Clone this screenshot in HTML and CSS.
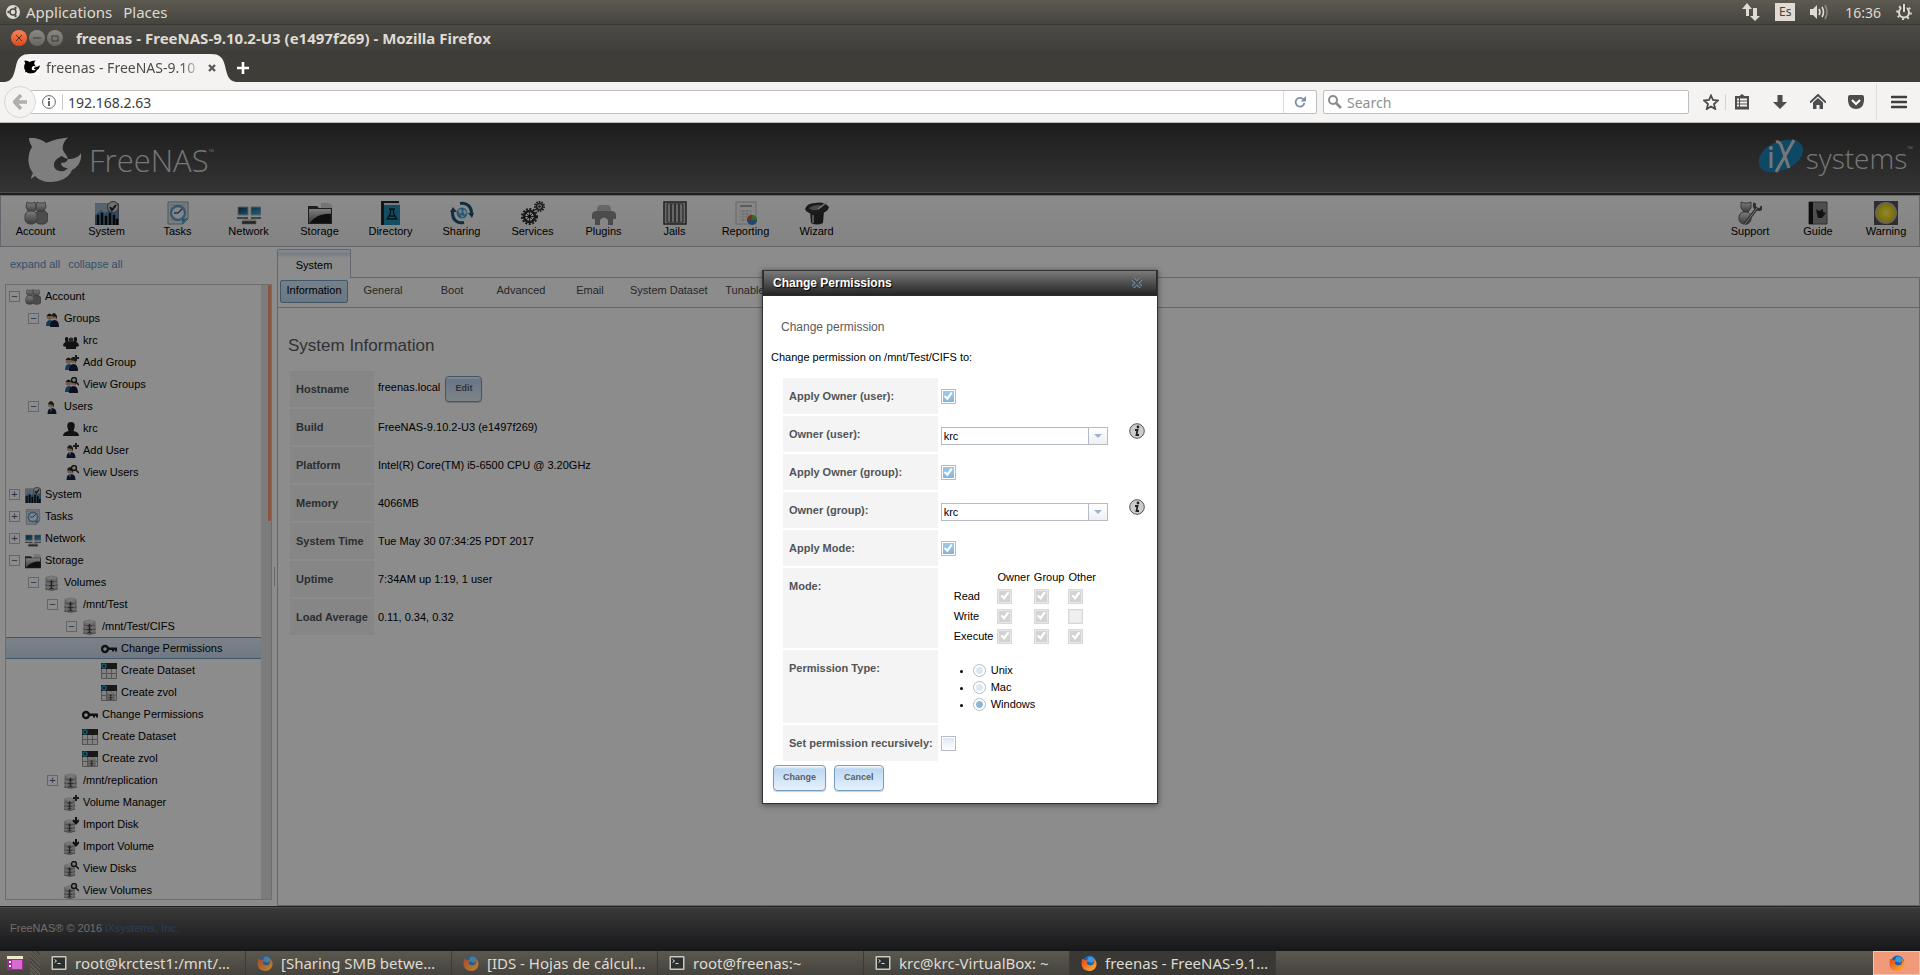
FILE: index.html
```html
<!DOCTYPE html>
<html lang="en">
<head>
    <meta charset="UTF-8">
    <meta name="viewport" content="width=device-width, initial-scale=1.0">
    <title>freenas - FreeNAS-9.10.2-U3 (e1497f269)</title>
    <link rel="stylesheet" href="styles.css">
</head>
<body>
    <!-- icon set -->
    <svg class="sprite" aria-hidden="true">
        <defs>
            <linearGradient id="silver" x1="0" y1="0" x2="0" y2="1"><stop offset="0" stop-color="#e6e6e6"/><stop offset="1" stop-color="#6a6a6a"/></linearGradient>
            <linearGradient id="screen" x1="0" y1="0" x2="1" y2="1"><stop offset="0" stop-color="#0d3a5c"/><stop offset="1" stop-color="#3fb0e6"/></linearGradient>
            <radialGradient id="lamp"><stop offset="0" stop-color="#fffb60"/><stop offset="1" stop-color="#e8c800"/></radialGradient>
            <linearGradient id="fox" x1="0" y1="0" x2="1" y2="1"><stop offset="0" stop-color="#e2481b"/><stop offset="1" stop-color="#ffb52e"/></linearGradient>
        </defs>
        <symbol id="i-account" viewBox="0 0 24 24">
            <path d="M3 1l2 1h4l2-1 1 5-1 4-3 2-4-2-2-4zM13 1l2 1h4l2-1 1 5-2 4-4 2-3-2-1-4z" fill="url(#silver)" stroke="#777"/>
            <rect x="11" y="10" width="13" height="13" rx="5" fill="#8a8a8a" stroke="#666"/>
            <rect x="1" y="10" width="12" height="13" rx="5" fill="url(#silver)" stroke="#777"/>
        </symbol>
        <symbol id="i-system" viewBox="0 0 24 24">
            <path d="M0 3h24v21H0z" fill="#5c8bb5" stroke="#555"/>
            <path d="M0 14l6-5 4 3 6-5v-4H0z" fill="#9fb4c8"/>
            <path d="M2 24V14h2v10zM6 24V12h2v12zM10 24V15h2v9zM14 24V12h2v12zM18 24V14h2v10zM21 24v-6h2v6z" fill="#111" stroke="#111" stroke-width=".6"/>
            <circle cx="18" cy="6" r="5.5" fill="#ccc" stroke="#555"/><path d="M15 6l2 3 4-5" fill="none" stroke="#222" stroke-width="2"/>
        </symbol>
        <symbol id="i-tasks" viewBox="0 0 24 24">
            <path d="M2 1h20v17l-5 5H2z" fill="#dfe6e8" stroke="#88989c"/>
            <path d="M4 4h16M4 7h16M4 19h10" stroke="#a8b4b8"/>
            <circle cx="12" cy="12" r="7" fill="#eef4fa" stroke="#6c9bd0" stroke-width="2.4"/>
            <path d="M12 12l4-4M12 12H8" stroke="#3c5c80" stroke-width="1.4"/><path d="M22 17l-6 6v-5z" fill="#3a9ad0"/>
        </symbol>
        <symbol id="i-network" viewBox="0 0 24 24">
            <path d="M1 6h10v8H1zM14 6h10v8H14z" fill="url(#screen)" stroke="#aaa"/>
            <path d="M0 16h11v2H0zM14 16h10v2H14z" fill="#777"/><path d="M6 17v2h13v-2" fill="none" stroke="#bbb"/>
            <path d="M5 20h14v3H5z" fill="#444" stroke="#999" stroke-width=".6"/>
        </symbol>
        <symbol id="i-storage" viewBox="0 0 24 24">
            <path d="M13 7V2h8l3 2v8z" fill="#d4d4d4"/>
            <path d="M0 5h9l2 2h13v16H0z" fill="#3a3a3a"/><path d="M1 9h22v13H1z" fill="#1d1d1d"/>
            <path d="M1 8h22v5C14 12 6 16 2 22H1z" fill="url(#silver)"/>
        </symbol>
        <symbol id="i-directory" viewBox="0 0 24 24">
            <path d="M2 0h18v2H5v22H2z" fill="#202830"/><path d="M5 3h16v21H5z" fill="#2290b8"/><path d="M5 2h16v2H5z" fill="#dde"/>
            <path d="M10 8h6M11.5 8v4l-3 6h9l-3-6V8M10 15h6" fill="none" stroke="#12222c" stroke-width="1.5"/>
        </symbol>
        <symbol id="i-sharing" viewBox="0 0 24 24">
            <circle cx="12" cy="12" r="5.5" fill="#4aa0d4"/><path d="M8 9l3-1 1 3-2 2zM14 8l3 3-2 3-2-3zM11 14l3 1-2 2z" fill="#d0e8f6"/>
            <path d="M10 2.5C17 1 22 6 21.5 13M14 21.5C6 23 2 18 2.5 10" fill="none" stroke="#1d5578" stroke-width="3"/>
            <path d="M18 12h6l-2 5zM0 11l3-5 4 5z" fill="#1d5578"/>
        </symbol>
        <symbol id="i-services" viewBox="0 0 24 24">
            <circle cx="8.5" cy="15.5" r="7.5" fill="none" stroke="#2a2a2a" stroke-width="2" stroke-dasharray="2 1.5"/>
            <circle cx="8.5" cy="15.5" r="5.5" fill="none" stroke="#2a2a2a" stroke-width="2.5"/>
            <path d="M8.5 10v11M3 15.5h11M5 12l7 7M12 12l-7 7" stroke="#3a3a3a"/><circle cx="8.5" cy="15.5" r="2" fill="#222"/>
            <circle cx="18.5" cy="5.5" r="4.5" fill="none" stroke="#2a2a2a" stroke-width="2" stroke-dasharray="1.5 1"/>
            <circle cx="18.5" cy="5.5" r="3" fill="none" stroke="#333" stroke-width="1.5"/><circle cx="18.5" cy="5.5" r="1.3" fill="#222"/>
        </symbol>
        <symbol id="i-plugins" viewBox="0 0 24 24">
            <path d="M6 5q6-2 12 0l1 5q5 0 5 4v4h-3v6h-5v-5q-4-5-8 0v5H3v-6H0v-4q0-4 5-4z" fill="#8a8a8a"/>
            <path d="M6 5q6-2 12 0l1 5H5z" fill="#bcbcbc"/>
        </symbol>
        <symbol id="i-jails" viewBox="0 0 24 24">
            <path d="M1 1h22v22H1z" fill="#c4c4c4" stroke="#3a3a3a" stroke-width="1.5"/>
            <path d="M4 3h16v18H4z" fill="#9a9a9a" stroke="#444"/>
            <path d="M8 3v18M12 3v18M16 3v18" stroke="#4a4a4a" stroke-width="1.5"/><path d="M6 3v18M10 3v18M14 3v18M18 3v18" stroke="#ddd"/>
        </symbol>
        <symbol id="i-reporting" viewBox="0 0 24 24">
            <path d="M2 1h20v22H2z" fill="#f4f4f4" stroke="#bbb"/><path d="M6 4h12v2H6z" fill="#aaa"/>
            <path d="M5 10h13M5 13h13M5 16h8M5 19h8M9 9v12M13 9v8" stroke="#ccc"/>
            <circle cx="18" cy="19" r="5" fill="#3c80c8"/><path d="M18 19v-5a5 5 0 0 0-5 5z" fill="#e8502a"/><path d="M18 19v-5a5 5 0 0 1 5 5z" fill="#6cbc3c"/>
        </symbol>
        <symbol id="i-wizard" viewBox="0 0 24 24">
            <path d="M5 10h14l-1 12q-6 3-12 0z" fill="#2c2c2c"/><path d="M8 14v8" stroke="#999" stroke-width="2"/>
            <path d="M0 8q2-6 10-6 9-2 14 4-1 6-12 7Q1 13 0 8z" fill="#333"/><path d="M4 7q7-5 14-2-4 5-11 4z" fill="#888"/>
            <path d="M13 8l9-7" stroke="#ddd" stroke-width="1.5"/>
        </symbol>
        <symbol id="i-support" viewBox="0 0 24 24">
            <path d="M3 1l3 1h4l3-1v6l-3 4H6L3 7z" fill="url(#silver)" stroke="#666"/><rect x="1" y="11" width="12" height="12" rx="5" fill="url(#silver)" stroke="#666"/>
            <path d="M7 23L19 7M17 2q-2 4 2 6t5-3" fill="none" stroke="#555" stroke-width="3"/><path d="M7 23L19 7" stroke="#ddd"/>
        </symbol>
        <symbol id="i-guide" viewBox="0 0 24 24">
            <path d="M3 1h18v22H3z" fill="#8e8e8e" stroke="#555"/><path d="M3 1h4v22H3z" fill="#161616"/><path d="M10 8l3 2 4-2v3l3 1-4 5h-4z" fill="#222"/>
        </symbol>
        <symbol id="i-warning" viewBox="0 0 24 24">
            <path d="M0 0h24v24H0z" fill="#555"/><circle cx="12" cy="12" r="11" fill="#b8b8a0"/><circle cx="12" cy="12" r="9" fill="url(#lamp)"/>
        </symbol>
        <symbol id="i-group" viewBox="0 0 16 16">
            <path d="M2 15q0-6 4-6t4 6z" fill="#1f6ba8"/><circle cx="5.5" cy="6" r="2.8" fill="#caa78a"/><path d="M2.5 5q3-5 6 0z" fill="#2a2018"/>
            <path d="M6 16q0-7 4.5-7t4.5 7z" fill="#181c38"/><circle cx="10" cy="5.5" r="2.8" fill="#d4b498"/><path d="M7 5q3-6 6 0v4l-1-3z" fill="#3a2c20"/>
        </symbol>
        <symbol id="i-user" viewBox="0 0 16 16">
            <path d="M3.5 15q0-6 4.5-6t4.5 6z" fill="#1a1e3c"/><circle cx="7" cy="5.5" r="3" fill="#cbaa8e"/><path d="M4 5q3-6 6 0v4l-1-3z" fill="#3a2c20"/><path d="M6 9l1 4 1-4z" fill="#9cc0e0"/>
        </symbol>
        <symbol id="i-people" viewBox="0 0 16 16">
            <path d="M0 13q0-3 2.5-4-1.5-5 1-5t1.500 4l3 1 3-1q-1-4 1.500-4t1 5q2.500 1 2.500 4l-3 1v2H3v-2z" fill="#222"/><circle cx="8" cy="7" r="2.4" fill="#444"/>
        </symbol>
        <symbol id="i-person" viewBox="0 0 16 16">
            <path d="M0 15q0-4 5.5-5Q2 1 8 1t2.500 9Q16 11 16 15z" fill="#222"/>
        </symbol>
        <symbol id="i-plus" viewBox="0 0 16 16"><path d="M13 0v6M10 3h6" stroke="#333" stroke-width="2"/></symbol>
        <symbol id="i-lens" viewBox="0 0 16 16"><circle cx="11" cy="3" r="2.5" fill="#ddd" stroke="#222" stroke-width="1.4"/><path d="M13 5l3 3" stroke="#222" stroke-width="1.5"/></symbol>
        <symbol id="i-arrow" viewBox="0 0 16 16"><path d="M13 0v6M10 3l3 3.500L16 3" fill="none" stroke="#222" stroke-width="2"/></symbol>
        <symbol id="i-volume" viewBox="0 0 16 16">
            <path d="M2 2.500q5-3 11 0V14q-5 3-11 0z" fill="#c4c4c4" stroke="#aaa"/><path d="M2 6q5 2 11 0M1 10q6 2 13 0M1 14q6 2 13 0" fill="none" stroke="#888"/>
            <ellipse cx="7.500" cy="2.500" rx="5" ry="1.500" fill="#ddd"/><path d="M7.500 5v9" stroke="#444" stroke-width="1.500"/><path d="M5.500 7h4M5 10.500h5M5.500 13.500h4" stroke="#4c4c4c" stroke-width="1.200"/>
        </symbol>
        <symbol id="i-key" viewBox="0 0 16 16">
            <path d="M7 6.500h9v4h-2V9h-1v1.500h-2V9H7z" fill="#222"/><circle cx="4" cy="8" r="3" fill="none" stroke="#222" stroke-width="2.400"/>
        </symbol>
        <symbol id="i-dataset" viewBox="0 0 16 16">
            <path d="M0 6h16v10H0z" fill="#ededed"/><path d="M.5 6v9.500h15V6M5.500 6v10M10.500 6v10M0 10.500h16" fill="none" stroke="#9a9a9a"/>
            <path d="M0 0h16v6H0z" fill="#2c2c2c"/><circle cx="3" cy="3" r="2" fill="none" stroke="#2aa8c8" stroke-width="1.500"/>
        </symbol>
        <symbol id="i-terminal" viewBox="0 0 16 16">
            <rect x=".5" y="1" width="15" height="14" rx="1" fill="#c8c8c4"/><path d="M2 2.500h12v11H2z" fill="#2c302e"/><path d="M3.500 4.500l2 1.500-2 1.500M6.500 8.500h3" fill="none" stroke="#ddd"/>
        </symbol>
        <symbol id="i-firefox" viewBox="0 0 16 16">
            <circle cx="8.500" cy="7" r="6.500" fill="#1f5fa8"/><path d="M7 2q5-2 7 3l-3 3-5-2z" fill="#3a9ad8"/>
            <path d="M1 4q2 0 3 1 1 0 3 1-2 1-1 3 2 2 5 1 3-2 2-6 3 2 2.500 6Q14 16 8 16 0 15 .5 8z" fill="url(#fox)"/>
        </symbol>
        <symbol id="i-shark" viewBox="0 0 54 46">
            <path fill-rule="evenodd" d="M1 1C7 .5 14 2 18 6 25 3 33 1 40 .5 36 4 34 9 35 13 36 16 39 18 40 22 46 22 51 20 53 16 54 24 50 30 44 33 41 41 32 45 22 45 16 45 11 43 7 39L3 42C3 40 4 38 5 36 2 32 0 27 .5 21 1 16 2 13 4 10 2 6 1 4 1 1zM34 19C29 21 26 24 26 28 26 33 31 35 36 34 38 33 39 32 40 31 36 31 33 29 33 26 36 26 39 25 40 22 37 21 35 20 34 19z"/>
        </symbol>
    </svg>

    <!-- desktop top bar -->
    <div class="panel">
        <svg class="panel-logo" viewBox="0 0 14 14"><circle cx="7" cy="7" r="7" fill="#dfdbd2"/><circle cx="7" cy="7" r="3" fill="none" stroke="#4a4943" stroke-width="1.5"/><circle cx="2.5" cy="7" r="1.2" fill="#4a4943"/><circle cx="9.5" cy="3" r="1.2" fill="#4a4943"/><circle cx="9.5" cy="11" r="1.2" fill="#4a4943"/></svg>
        <button>Applications</button>
        <button>Places</button>
        <div class="indicators">
            <svg width="18" height="18" viewBox="0 0 18 18"><path d="M5 0l5 6H7v7H4V6H0zM13 18l-5-5h3V5h4v8h3z" fill="#dfdbd2"/></svg>
            <span class="lang">Es</span>
            <svg width="20" height="18" viewBox="0 0 20 18"><path d="M0 6h3l4-4v14l-4-4H0z" fill="#dfdbd2"/><path d="M9 6q2 3 0 6M12 4q3 5 0 10" fill="none" stroke="#dfdbd2" stroke-width="1.6"/><path d="M15 2q4 7 0 14" fill="none" stroke="#8b887f" stroke-width="1.6"/></svg>
            <span>16:36</span>
            <svg width="16" height="16" viewBox="0 0 16 16"><circle cx="8" cy="8.5" r="5" fill="none" stroke="#dfdbd2" stroke-width="2"/><circle cx="8" cy="8.5" r="6.8" fill="none" stroke="#dfdbd2" stroke-width="2" stroke-dasharray="2 3.3"/><path d="M8 0v8" stroke="#45443e" stroke-width="5"/><path d="M8 0v8" stroke="#dfdbd2" stroke-width="2"/></svg>
        </div>
    </div>

    <!-- browser window -->
    <div class="titlebar">
        <button class="win close" aria-label="Close"><svg viewBox="0 0 16 16"><path d="M5 5l6 6M11 5l-6 6"/></svg></button>
        <button class="win" aria-label="Minimize"><svg viewBox="0 0 16 16"><path d="M4 8h8"/></svg></button>
        <button class="win" aria-label="Maximize"><svg viewBox="0 0 16 16"><path d="M5 6h6v5H5z"/></svg></button>
        <span class="win-title">freenas - FreeNAS-9.10.2-U3 (e1497f269) - Mozilla Firefox</span>
    </div>
    <div class="tabstrip">
        <div class="browser-tab">
            <svg class="tab-shape" viewBox="0 0 232 28" preserveAspectRatio="none"><path d="M0 28C8 27 9 20 11 12 13 3 17 0 25 0H207C215 0 219 3 221 12 223 20 224 27 232 28z" fill="#f4f3f2"/></svg>
            <svg class="favicon" viewBox="0 0 54 46"><use href="#i-shark"/></svg>
            <span class="tab-text">freenas - FreeNAS-9.10</span>
            <button aria-label="Close tab"><svg width="8" height="8" viewBox="0 0 8 8"><path d="M1 1l6 6M7 1L1 7" stroke="#5a5a5a" stroke-width="2.4"/></svg></button>
        </div>
        <button class="new-tab" aria-label="New tab"><svg width="14" height="14" viewBox="0 0 14 14"><path d="M7 1v12M1 7h12" stroke="#fff" stroke-width="2.6"/></svg></button>
    </div>
    <div class="navbar">
        <button class="back" aria-label="Back"><svg width="14" height="16" viewBox="0 0 14 16"><path d="M8 1L1.5 8 8 15M2 8h12" fill="none" stroke="#aeaeae" stroke-width="3.4"/></svg></button>
        <div class="urlbar">
            <svg width="14" height="14" viewBox="0 0 14 14"><circle cx="7" cy="7" r="6.4" fill="none" stroke="#666"/><path d="M7 6v5M7 3v2" stroke="#555" stroke-width="1.8"/></svg>
            <input type="text" value="192.168.2.63" aria-label="Address">
            <button aria-label="Reload"><svg width="12" height="12" viewBox="0 0 12 12"><path d="M9.5 3.5A4.4 4.4 0 1 0 10.4 7" fill="none" stroke="#7f8fa5" stroke-width="1.8"/><path d="M12 0v5.500H6.500z" fill="#7f8fa5"/></svg></button>
        </div>
        <div class="searchbar">
            <svg width="14" height="14" viewBox="0 0 14 14"><circle cx="5" cy="5" r="4" fill="none" stroke="#8c8c8c" stroke-width="2"/><path d="M8 8l5 5" stroke="#8c8c8c" stroke-width="2.6"/></svg>
            <input type="text" placeholder="Search" aria-label="Search">
        </div>
        <div class="nav-tools">
            <button aria-label="Bookmark"><svg viewBox="0 0 16 16"><path d="M8 1.500l2 4.500 5 .5-4 3.500 1.200 5L8 12.500 3.800 15 5 10 1 6.500 6 6z" fill="none" stroke="#4a4a4a" stroke-width="1.800"/></svg></button>
            <button class="split" aria-label="Bookmarks menu"><svg viewBox="0 0 16 16"><path d="M8 0l2.500 2H15v13.500H1V2h4.500z" fill="#4d4d4d"/><path d="M3 5.500h2M6 5.500h7M3 8.500h2M6 8.500h7M3 11.500h2M6 11.500h7" stroke="#f4f3f2" stroke-width="1.800"/></svg></button>
            <button aria-label="Downloads"><svg viewBox="0 0 16 16"><path d="M5.500 1h5v7H15l-7 7-7-7h4.500z" fill="#4d4d4d"/></svg></button>
            <button aria-label="Home"><svg viewBox="0 0 16 16"><path d="M0 8.500L8 1l8 7.500" fill="none" stroke="#4d4d4d" stroke-width="2"/><path d="M3 8.500L8 4l5 4.500V15h-3.500v-4h-3v4H3z" fill="#4d4d4d"/></svg></button>
            <button aria-label="Pocket"><svg viewBox="0 0 16 16"><path d="M0 3q0-2 2-2h12q2 0 2 2v4q-1 8-8 8T0 7z" fill="#4d4d4d"/><path d="M4 6l4 4 4-4" fill="none" stroke="#fff" stroke-width="2"/></svg></button>
            <button class="menu" aria-label="Menu"><svg viewBox="0 0 16 16"><path d="M1 3h14M1 8h14M1 13h14" stroke="#3f3f3f" stroke-width="2.600" stroke-linecap="round"/></svg></button>
        </div>
    </div>

    <!-- web page -->
    <div class="page">
        <header class="header">
            <div class="brand">
                <svg class="shark" viewBox="0 0 54 46"><use href="#i-shark"/></svg>
                <span>FreeNAS</span><sup>™</sup>
            </div>
            <div class="ix">
                <svg class="ix-mark" viewBox="0 0 46 34"><path d="M2 28Q-2 20 6 11T29 1q10-1 14 4 5 7-2 16T18 33Q6 35 2 28z" fill="#1c84b8"/><path d="M13 13v16M18 3q3-1 5 3l8 23M36 1L18 33" fill="none" stroke="#d8d8d8" stroke-width="3"/><circle cx="13" cy="9" r="2" fill="#d8d8d8"/></svg>
                <span>systems</span><sup>™</sup>
            </div>
        </header>

        <nav class="toolbar">
            <button><svg><use href="#i-account"/></svg>Account</button>
            <button><svg><use href="#i-system"/></svg>System</button>
            <button><svg><use href="#i-tasks"/></svg>Tasks</button>
            <button><svg><use href="#i-network"/></svg>Network</button>
            <button><svg><use href="#i-storage"/></svg>Storage</button>
            <button><svg><use href="#i-directory"/></svg>Directory</button>
            <button><svg><use href="#i-sharing"/></svg>Sharing</button>
            <button><svg><use href="#i-services"/></svg>Services</button>
            <button><svg><use href="#i-plugins"/></svg>Plugins</button>
            <button><svg><use href="#i-jails"/></svg>Jails</button>
            <button><svg><use href="#i-reporting"/></svg>Reporting</button>
            <button><svg><use href="#i-wizard"/></svg>Wizard</button>
            <div class="toolbar-right">
                <button><svg><use href="#i-support"/></svg>Support</button>
                <button><svg><use href="#i-guide"/></svg>Guide</button>
                <button><svg><use href="#i-warning"/></svg>Warning</button>
            </div>
        </nav>

        <main class="main">
            <aside class="sidebar">
                <div class="tree-links"><a href="#">expand all</a><a href="#">collapse all</a></div>
                <div class="tree-box">
                    <ul class="tree">
                        <li class="l0"><button class="exp">−</button><svg><use href="#i-account"/></svg>Account</li>
                        <li class="l1"><button class="exp">−</button><svg><use href="#i-group"/></svg>Groups</li>
                        <li class="l2 leaf"><svg><use href="#i-people"/></svg>krc</li>
                        <li class="l2 leaf"><svg><use href="#i-group"/><use href="#i-plus"/></svg>Add Group</li>
                        <li class="l2 leaf"><svg><use href="#i-group"/><use href="#i-lens"/></svg>View Groups</li>
                        <li class="l1"><button class="exp">−</button><svg><use href="#i-user"/></svg>Users</li>
                        <li class="l2 leaf"><svg><use href="#i-person"/></svg>krc</li>
                        <li class="l2 leaf"><svg><use href="#i-user"/><use href="#i-plus"/></svg>Add User</li>
                        <li class="l2 leaf"><svg><use href="#i-user"/><use href="#i-lens"/></svg>View Users</li>
                        <li class="l0"><button class="exp">+</button><svg><use href="#i-system"/></svg>System</li>
                        <li class="l0"><button class="exp">+</button><svg><use href="#i-tasks"/></svg>Tasks</li>
                        <li class="l0"><button class="exp">+</button><svg><use href="#i-network"/></svg>Network</li>
                        <li class="l0"><button class="exp">−</button><svg><use href="#i-storage"/></svg>Storage</li>
                        <li class="l1"><button class="exp">−</button><svg><use href="#i-volume"/></svg>Volumes</li>
                        <li class="l2"><button class="exp">−</button><svg><use href="#i-volume"/></svg>/mnt/Test</li>
                        <li class="l3"><button class="exp">−</button><svg><use href="#i-volume"/></svg>/mnt/Test/CIFS</li>
                        <li class="l4 leaf selected"><svg><use href="#i-key"/></svg>Change Permissions</li>
                        <li class="l4 leaf"><svg><use href="#i-dataset"/></svg>Create Dataset</li>
                        <li class="l4 leaf"><svg><use href="#i-dataset"/><use href="#i-volume" x="5" y="6" width="10" height="10"/></svg>Create zvol</li>
                        <li class="l3 leaf"><svg><use href="#i-key"/></svg>Change Permissions</li>
                        <li class="l3 leaf"><svg><use href="#i-dataset"/></svg>Create Dataset</li>
                        <li class="l3 leaf"><svg><use href="#i-dataset"/><use href="#i-volume" x="5" y="6" width="10" height="10"/></svg>Create zvol</li>
                        <li class="l2"><button class="exp">+</button><svg><use href="#i-volume"/></svg>/mnt/replication</li>
                        <li class="l2 leaf"><svg><use href="#i-volume" y="2" width="14" height="14"/><use href="#i-plus"/></svg>Volume Manager</li>
                        <li class="l2 leaf"><svg><use href="#i-volume" y="2" width="14" height="14"/><use href="#i-arrow"/></svg>Import Disk</li>
                        <li class="l2 leaf"><svg><use href="#i-volume" y="2" width="14" height="14"/><use href="#i-arrow"/></svg>Import Volume</li>
                        <li class="l2 leaf"><svg><use href="#i-volume" y="2" width="14" height="14"/><use href="#i-lens"/></svg>View Disks</li>
                        <li class="l2 leaf"><svg><use href="#i-volume" y="2" width="14" height="14"/><use href="#i-lens"/></svg>View Volumes</li>
                    </ul>
                    <div class="scroll"><div class="thumb"></div></div>
                </div>
            </aside>
            <div class="splitter"><span></span></div>
            <section class="pane">
                <div class="tabs"><button class="tab">System</button></div>
                <div class="pane-body">
                    <div class="subtabs">
                        <button class="active">Information</button>
                        <button>General</button>
                        <button>Boot</button>
                        <button>Advanced</button>
                        <button>Email</button>
                        <button>System Dataset</button>
                        <button>Tunables</button>
                    </div>
                    <h2>System Information</h2>
                    <table class="info">
                        <tr><th>Hostname</th><td>freenas.local <button class="btn">Edit</button></td></tr>
                        <tr><th>Build</th><td>FreeNAS-9.10.2-U3 (e1497f269)</td></tr>
                        <tr><th>Platform</th><td>Intel(R) Core(TM) i5-6500 CPU @ 3.20GHz</td></tr>
                        <tr><th>Memory</th><td>4066MB</td></tr>
                        <tr><th>System Time</th><td>Tue May 30 07:34:25 PDT 2017</td></tr>
                        <tr><th>Uptime</th><td>7:34AM up 1:19, 1 user</td></tr>
                        <tr><th>Load Average</th><td>0.11, 0.34, 0.32</td></tr>
                    </table>
                </div>
            </section>
        </main>

        <footer class="footer">FreeNAS® © 2016 <a href="#">iXsystems, Inc.</a></footer>

        <div class="underlay">
            <div class="dialog" role="dialog" aria-labelledby="dialogTitle">
                <div class="dialog-title">
                    <span id="dialogTitle">Change Permissions</span>
                    <button aria-label="Close dialog"><svg width="10" height="10" viewBox="0 0 10 10"><path d="M1 1l8 8M9 1L1 9" stroke="#8a8a8a" stroke-width="4"/><path d="M1 1l8 8M9 1L1 9" stroke="#3c5064" stroke-width="2"/></svg></button>
                </div>
                <form class="dialog-body">
                    <h3>Change permission</h3>
                    <p>Change permission on /mnt/Test/CIFS to:</p>
                    <table class="fields">
                        <tr><th><label for="applyUser">Apply Owner (user):</label></th><td><input type="checkbox" id="applyUser" checked></td></tr>
                        <tr>
                            <th><label for="ownerUser">Owner (user):</label></th>
                            <td><div class="combo-row"><span class="combo"><select id="ownerUser"><option>krc</option></select></span><svg class="tip" viewBox="0 0 16 16"><circle cx="8" cy="8" r="7.3" fill="#ccc" stroke="#555"/><circle cx="9" cy="4" r="1.400" fill="#222"/><path d="M6 7h2.500L7.500 12H10" fill="none" stroke="#222" stroke-width="1.800"/></svg></div></td>
                        </tr>
                        <tr><th><label for="applyGroup">Apply Owner (group):</label></th><td><input type="checkbox" id="applyGroup" checked></td></tr>
                        <tr>
                            <th><label for="ownerGroup">Owner (group):</label></th>
                            <td><div class="combo-row"><span class="combo"><select id="ownerGroup"><option>krc</option></select></span><svg class="tip" viewBox="0 0 16 16"><circle cx="8" cy="8" r="7.3" fill="#ccc" stroke="#555"/><circle cx="9" cy="4" r="1.400" fill="#222"/><path d="M6 7h2.500L7.500 12H10" fill="none" stroke="#222" stroke-width="1.800"/></svg></div></td>
                        </tr>
                        <tr><th><label for="applyMode">Apply Mode:</label></th><td><input type="checkbox" id="applyMode" checked></td></tr>
                        <tr>
                            <th>Mode:</th>
                            <td class="flush">
                                <table class="mode">
                                    <tr><td></td><td>Owner</td><td>Group</td><td>Other</td></tr>
                                    <tr><td>Read</td><td><input type="checkbox" aria-label="Owner read" checked disabled></td><td><input type="checkbox" aria-label="Group read" checked disabled></td><td><input type="checkbox" aria-label="Other read" checked disabled></td></tr>
                                    <tr><td>Write</td><td><input type="checkbox" aria-label="Owner write" checked disabled></td><td><input type="checkbox" aria-label="Group write" checked disabled></td><td><input type="checkbox" aria-label="Other write" disabled></td></tr>
                                    <tr><td>Execute</td><td><input type="checkbox" aria-label="Owner execute" checked disabled></td><td><input type="checkbox" aria-label="Group execute" checked disabled></td><td><input type="checkbox" aria-label="Other execute" checked disabled></td></tr>
                                </table>
                            </td>
                        </tr>
                        <tr>
                            <th>Permission Type:</th>
                            <td class="flush">
                                <ul class="types">
                                    <li><label><input type="radio" name="type">Unix</label></li>
                                    <li><label><input type="radio" name="type">Mac</label></li>
                                    <li><label><input type="radio" name="type" checked>Windows</label></li>
                                </ul>
                            </td>
                        </tr>
                        <tr><th><label for="recursive">Set permission recursively:</label></th><td><input type="checkbox" id="recursive"></td></tr>
                    </table>
                    <div class="actions">
                        <button type="button" class="btn">Change</button>
                        <button type="button" class="btn">Cancel</button>
                    </div>
                </form>
            </div>
        </div>
    </div>

    <!-- desktop bottom bar -->
    <div class="taskbar">
        <button class="show-desktop" aria-label="Show desktop"><svg viewBox="0 0 16 16"><path d="M0 1h16v3H0z" fill="#efe9c8"/><path d="M0 4h16v11H0z" fill="#a02a9a"/><path d="M5 5h10v9H5z" fill="#d86ad2"/><path d="M2 7h2M2 11h2" stroke="#fff" stroke-width="2"/></svg></button>
        <span class="grip"></span>
        <button class="task"><svg><use href="#i-terminal"/></svg><span>root@krctest1:/mnt/…</span></button>
        <button class="task faded"><svg><use href="#i-firefox"/></svg><span>[Sharing SMB betwe…</span></button>
        <button class="task faded"><svg><use href="#i-firefox"/></svg><span>[IDS - Hojas de cálcul…</span></button>
        <button class="task"><svg><use href="#i-terminal"/></svg><span>root@freenas:~</span></button>
        <button class="task"><svg><use href="#i-terminal"/></svg><span>krc@krc-VirtualBox: ~</span></button>
        <button class="task current"><svg><use href="#i-firefox"/></svg><span>freenas - FreeNAS-9.1…</span></button>
        <button class="workspace" aria-label="Workspace"><svg><use href="#i-firefox"/></svg></button>
    </div>
</body>
</html>
```

FILE: styles.css
```css
* {
    box-sizing: border-box;
}
body {
    margin: 0;
    height: 100vh;
    display: flex;
    flex-direction: column;
    overflow: hidden;
    font: 14px "Noto Sans", sans-serif;
    color: #dfdbd2;
}
button, input, select {
    font: inherit;
    color: inherit;
    border: 0;
    padding: 0;
    margin: 0;
    background: none;
}
a {
    color: #5c93c4;
    text-decoration: none;
}
.sprite {
    position: absolute;
    width: 0;
    height: 0;
}

/* desktop bars */
.panel {
    flex: none;
    height: 25px;
    display: flex;
    align-items: center;
    padding: 0 8px 0 6px;
    background: linear-gradient(#5d5a50, #45443e);
    border-bottom: 1px solid #3a3935;
}
.panel-logo {
    width: 14px;
    height: 14px;
    margin-right: 6px;
}
.panel button {
    margin-right: 11px;
    font-size: 15px;
    line-height: 20px;
}
.indicators {
    margin-left: auto;
    display: flex;
    align-items: center;
    gap: 15px;
}
.lang {
    width: 20px;
    height: 18px;
    background: #dfdbd2;
    color: #45443e;
    font-size: 12px;
    line-height: 18px;
    text-align: center;
}
.taskbar {
    flex: none;
    height: 24px;
    display: flex;
    align-items: center;
    background: linear-gradient(#5b584f, #45433d);
    font-size: 15px;
    line-height: 20px;
}
.show-desktop {
    width: 30px;
    height: 16px;
    padding-left: 7px;
}
.show-desktop svg {
    display: block;
    width: 16px;
    height: 16px;
}
.grip {
    width: 10px;
    height: 24px;
    background: repeating-linear-gradient(45deg, #45433d 0 1px, #5b584f 1px 3px);
}
.task {
    width: 206px;
    height: 24px;
    display: flex;
    align-items: center;
    gap: 8px;
    padding-left: 11px;
    border-right: 1px solid #3c3b37;
    white-space: nowrap;
}
.task svg, .workspace svg {
    width: 16px;
    height: 16px;
}
.faded svg {
    opacity: 0.6;
}
.current {
    background: #3a3835;
}
.workspace {
    width: 47px;
    height: 24px;
    display: flex;
    align-items: center;
    justify-content: center;
    margin-left: auto;
    background: #f19a7a;
    border: 1px solid #f5c4b0;
}

/* browser window */
.titlebar {
    flex: none;
    height: 26px;
    display: flex;
    align-items: center;
    gap: 2px;
    padding-left: 11px;
    background: linear-gradient(#4b4a45, #403f3b);
}
.win {
    width: 16px;
    height: 16px;
    border-radius: 50%;
    background: linear-gradient(#8b8981, #67655e);
}
.win svg {
    display: block;
    fill: none;
    stroke: #3c3b37;
}
.close {
    background: linear-gradient(#f7835c, #e0481a);
}
.win-title {
    margin-left: 11px;
    font-size: 15px;
    line-height: 20px;
    font-weight: bold;
}
.tabstrip {
    flex: none;
    height: 31px;
    display: flex;
    align-items: flex-end;
    padding-left: 5px;
    background: #3e3d38;
}
.browser-tab {
    position: relative;
    width: 231px;
    height: 28px;
    display: flex;
    align-items: center;
    gap: 6px;
    padding: 0 0 2px 19px;
    color: #4c4c4c;
}
.browser-tab > * {
    position: relative;
}
.browser-tab .tab-shape {
    position: absolute;
    inset: 0;
    width: 100%;
    height: 100%;
}
.browser-tab .favicon {
    width: 16px;
    height: 16px;
    background: #fff;
}
.tab-text {
    width: 156px;
    white-space: nowrap;
    -webkit-mask-image: linear-gradient(to right, #000 135px, transparent);
    mask-image: linear-gradient(to right, #000 135px, transparent);
}
.browser-tab button {
    line-height: 8px;
}
.new-tab {
    height: 28px;
    padding-bottom: 1px;
}
.new-tab svg {
    display: block;
}
.navbar {
    flex: none;
    height: 41px;
    display: flex;
    align-items: center;
    padding: 0 13px 0 4px;
    background: #f4f3f2;
    border-bottom: 1px solid #bbb;
    color: #3c3c3c;
}
.back {
    position: relative;
    width: 32px;
    height: 32px;
    display: flex;
    align-items: center;
    justify-content: center;
    border: 1px solid #d8d7d5;
    border-radius: 50%;
    background: #f4f3f2;
}
.urlbar, .searchbar {
    height: 24px;
    display: flex;
    align-items: center;
    background: #fff;
    border: 1px solid #c0bfbd;
    border-radius: 2px;
}
.urlbar {
    flex: 1;
    margin-left: -6px;
    padding-left: 11px;
}
.urlbar input {
    flex: 1;
    height: 16px;
    margin-left: 6px;
    padding-left: 5px;
    border-left: 1px solid #c8c8c8;
}
.urlbar button {
    width: 33px;
    height: 22px;
    border-left: 1px solid #ddd;
}
.searchbar {
    width: 366px;
    margin: 0 14px 0 6px;
    padding-left: 4px;
    gap: 5px;
}
.searchbar input {
    flex: 1;
}
.searchbar input::placeholder {
    color: #8f8f8f;
}
.nav-tools {
    display: flex;
    align-items: center;
    gap: 22px;
}
.nav-tools svg {
    display: block;
    width: 16px;
    height: 16px;
}
.nav-tools .split {
    margin-left: -16px;
    padding-left: 8px;
    border-left: 1px solid #d2d2d2;
}
.nav-tools .menu {
    margin-left: -10px;
    padding: 10px 0 10px 14px;
    border-left: 1px solid #dcdcdc;
}

/* page */
.page {
    position: relative;
    flex: 1;
    min-height: 0;
    display: flex;
    flex-direction: column;
    background: #fff;
    font: 11px/14px "Liberation Sans", Arial, sans-serif;
    color: #000;
}
.header {
    flex: none;
    height: 72px;
    display: flex;
    justify-content: space-between;
    background: linear-gradient(#363636, #606060);
    border-bottom: 2px solid #3a3a3a;
    box-shadow: inset 0 -1px #8a8a8a;
    font-family: "Open Sans", sans-serif;
    font-weight: 300;
    color: #d8d8d8;
}
.brand, .ix {
    display: flex;
    align-items: center;
}
.brand {
    padding-left: 28px;
    padding-top: 3px;
    font-size: 31px;
}
.shark {
    width: 54px;
    height: 46px;
    margin-right: 7px;
    fill: #e6e6e6;
}
.brand sup, .ix sup {
    align-self: flex-start;
    margin-top: 22px;
    font-size: 8px;
    line-height: 8px;
}
.ix {
    padding-right: 7px;
    font-size: 28px;
}
.ix-mark {
    width: 46px;
    height: 34px;
    margin: 0 2px 4px 0;
}
.toolbar {
    flex: none;
    height: 52px;
    display: flex;
    background: linear-gradient(#fdfdfd, #efefef);
    box-shadow: inset 0 0 0 1px #b5bcc7;
}
.toolbar button {
    width: 71px;
    padding-bottom: 3px;
    line-height: 13px;
}
.toolbar svg {
    display: block;
    width: 24px;
    height: 24px;
    margin: 0 auto;
}
.toolbar-right {
    display: flex;
    margin-left: auto;
}
.toolbar-right button {
    width: 68px;
}
.main {
    flex: 1;
    min-height: 0;
    display: flex;
}
.sidebar {
    width: 272px;
    display: flex;
    flex-direction: column;
    padding: 0 0 6px 5px;
}
.tree-links {
    display: flex;
    gap: 8px;
    height: 37px;
    padding: 10px 5px;
}
.tree-box {
    flex: 1;
    min-height: 0;
    display: flex;
    overflow: hidden;
    border: 1px solid #c8c8c8;
}
.tree {
    flex: 1;
    margin: 0;
    padding: 0;
    list-style: none;
}
.tree li {
    height: 22px;
    display: flex;
    align-items: center;
    gap: 4px;
    padding-left: 3px;
    border: solid transparent;
    border-width: 1px 0;
}
.tree svg {
    flex: none;
    width: 16px;
    height: 16px;
    margin-top: 2px;
}
.exp {
    width: 11px;
    height: 11px;
    margin-right: 1px;
    border: 1px solid #b5bcc7;
    color: #45607c;
    font-size: 11px;
    line-height: 8px;
}
.tree .leaf {
    padding-left: 19px;
}
.tree .l1 { padding-left: 22px; }
.tree .l2 { padding-left: 41px; }
.tree .l3 { padding-left: 60px; }
.tree .l2.leaf { padding-left: 57px; }
.tree .l3.leaf { padding-left: 76px; }
.tree .l4.leaf { padding-left: 95px; }
.tree .selected {
    background: linear-gradient(#e0ecf8, #cbdcec);
    border-color: #759dc0;
}
.scroll {
    width: 10px;
    background: #e2e2e2;
}
.thumb {
    width: 3px;
    height: 236px;
    margin-left: auto;
    border-radius: 1px;
    background: #ff9b77;
}
.splitter {
    width: 5px;
    display: flex;
    align-items: center;
    justify-content: center;
}
.splitter span {
    width: 1px;
    height: 19px;
    background: #b5bcc7;
}
.pane {
    flex: 1;
    min-width: 0;
    display: flex;
    flex-direction: column;
    padding-top: 2px;
}
.tabs {
    height: 29px;
    border-bottom: 1px solid #b5bcc7;
}
.tab {
    width: 74px;
    height: 29px;
    padding-top: 1px;
    border: 1px solid #b5bcc7;
    border-bottom: 0;
    border-radius: 2px 2px 0 0;
    background: linear-gradient(#fff, #d5e6f5 4px, #fff 8px);
}
.pane-body {
    flex: 1;
    border: 1px solid #b5bcc7;
    border-top: 0;
}
.subtabs {
    display: flex;
    gap: 1px;
    height: 30px;
    padding: 2px;
    border-bottom: 1px solid #b5bcc7;
}
.subtabs button {
    min-width: 68px;
    height: 23px;
    padding: 0 4px 3px;
    border: 1px solid transparent;
    border-radius: 2px;
    color: #494949;
}
.subtabs .active {
    color: #000;
    border-color: #759dc0;
    background: linear-gradient(#d6e8f8, #c2d8ee);
}
.pane h2 {
    margin: 28px 0 13px 10px;
    font-size: 17px;
    line-height: 20px;
    font-weight: normal;
    color: #5a5a60;
}
.info, .fields {
    margin-left: 10px;
    border-spacing: 2px;
}
.info th, .fields th {
    padding: 0 6px;
    background: #f4f4f4;
    color: #505458;
    text-align: left;
}
.info th {
    height: 36px;
}
.info td {
    padding: 0 2px;
}
.btn {
    height: 26px;
    padding: 0 9px 2px;
    border: 1px solid #759dc0;
    border-radius: 4px;
    background: linear-gradient(#fff, #bcd8f4 3px, #e6f1fc);
    box-shadow: 0 1px 1px rgba(0, 0, 0, 0.2);
    color: #5a5e64;
    font-size: 9px;
    font-weight: bold;
}
.info .btn {
    margin-left: 2px;
}
.footer {
    flex: none;
    height: 45px;
    padding: 14px 10px;
    background: linear-gradient(#6a6a6a, #2b2c30);
    border-top: 1px solid #3a3a3a;
    box-shadow: inset 0 1px #8a8a8a;
    color: #c8c8c8;
}
.footer a {
    color: #4a74a0;
}

/* dialog */
.underlay {
    position: absolute;
    inset: 0;
    display: flex;
    align-items: center;
    justify-content: center;
    background: rgba(0, 0, 0, 0.45);
}
.dialog {
    width: 396px;
    background: #fff;
    border: 1px solid #333;
    box-shadow: 0 1px 6px rgba(0, 0, 0, 0.5);
}
.dialog-title {
    height: 25px;
    display: flex;
    align-items: center;
    justify-content: space-between;
    padding: 0 14px 0 9px;
    background: linear-gradient(#7a7a7a, #242424);
    border: 1px solid #2b2b2b;
    border-top: 0;
    color: #fff;
    font-size: 12px;
    font-weight: bold;
    text-shadow: 1px 1px 1px #000;
}
.dialog-title svg {
    display: block;
}
.dialog-body {
    padding: 23px 8px 12px;
}
.dialog-body h3 {
    margin: 0 0 15px 10px;
    font-size: 12px;
    line-height: 16px;
    font-weight: normal;
    color: #5a5a60;
}
.dialog-body p {
    margin: 0 0 12px;
}
.fields th {
    padding: 11px 5px 11px 6px;
    vertical-align: top;
}
.fields td {
    padding: 11px 0 0 1px;
    vertical-align: top;
}
.fields input {
    appearance: none;
    display: block;
    position: relative;
    width: 15px;
    height: 15px;
    border: 1px solid #b5bcc7;
    background: linear-gradient(#d8e6f2, #fff);
    box-shadow: inset 0 0 0 1px #fff;
}
.fields input[type="checkbox"]:checked {
    background: linear-gradient(#9fcbea, #7fb4dc);
}
.fields input[type="checkbox"]:checked::after {
    content: "";
    position: absolute;
    left: 2px;
    top: 2px;
    width: 9px;
    height: 9px;
    background: #fff;
    clip-path: polygon(0 50%, 20% 35%, 38% 55%, 80% 0, 100% 15%, 42% 95%);
}
.fields input[type="checkbox"]:disabled {
    border-color: #d8d8d8;
    background: #d3d3d3;
    box-shadow: inset 0 0 0 1px #e8e8e8;
}
.fields input[type="checkbox"]:disabled:not(:checked) {
    background: #efefef;
}
.combo-row {
    display: flex;
    gap: 21px;
}
.combo {
    position: relative;
    width: 167px;
    height: 18px;
}
.combo select {
    appearance: none;
    display: block;
    width: 100%;
    height: 18px;
    padding: 0 22px 0 2px;
    border: 1px solid #b5bcc7;
    background: linear-gradient(#fff, #efefef) right / 18px 100% no-repeat #fff;
}
.combo::before {
    content: "";
    position: absolute;
    right: 19px;
    top: 1px;
    bottom: 1px;
    width: 1px;
    background: #b5bcc7;
}
.combo::after {
    content: "";
    position: absolute;
    right: 6px;
    top: 7px;
    border: 4px solid transparent;
    border-top-color: #9bb3d6;
    border-bottom: 0;
}
.tip {
    width: 16px;
    height: 16px;
    margin-top: -4px;
}
.fields .flush {
    padding: 0 0 0 14px;
}
.mode {
    border-spacing: 0;
    margin-bottom: 2px;
}
.mode td {
    height: 20px;
    padding: 0 4px 0 0;
    vertical-align: middle;
}
.mode tr:first-child td {
    height: 18px;
}
.types {
    margin: 12px 0 10px;
    padding-left: 19px;
    line-height: 17px;
}
.types li {
    height: 17px;
}
.types label {
    display: inline-flex;
    align-items: center;
    gap: 5px;
    height: 17px;
    vertical-align: top;
}
.fields .types input {
    width: 13px;
    height: 13px;
    border-radius: 50%;
    background: radial-gradient(#dde8f2 0 3px, #fff 4px);
}
.fields .types input:checked {
    background: radial-gradient(#8ab8dc 0 3px, #fff 4px);
}
.actions {
    display: flex;
    gap: 8px;
    padding: 2px 0 0 2px;
}
```
